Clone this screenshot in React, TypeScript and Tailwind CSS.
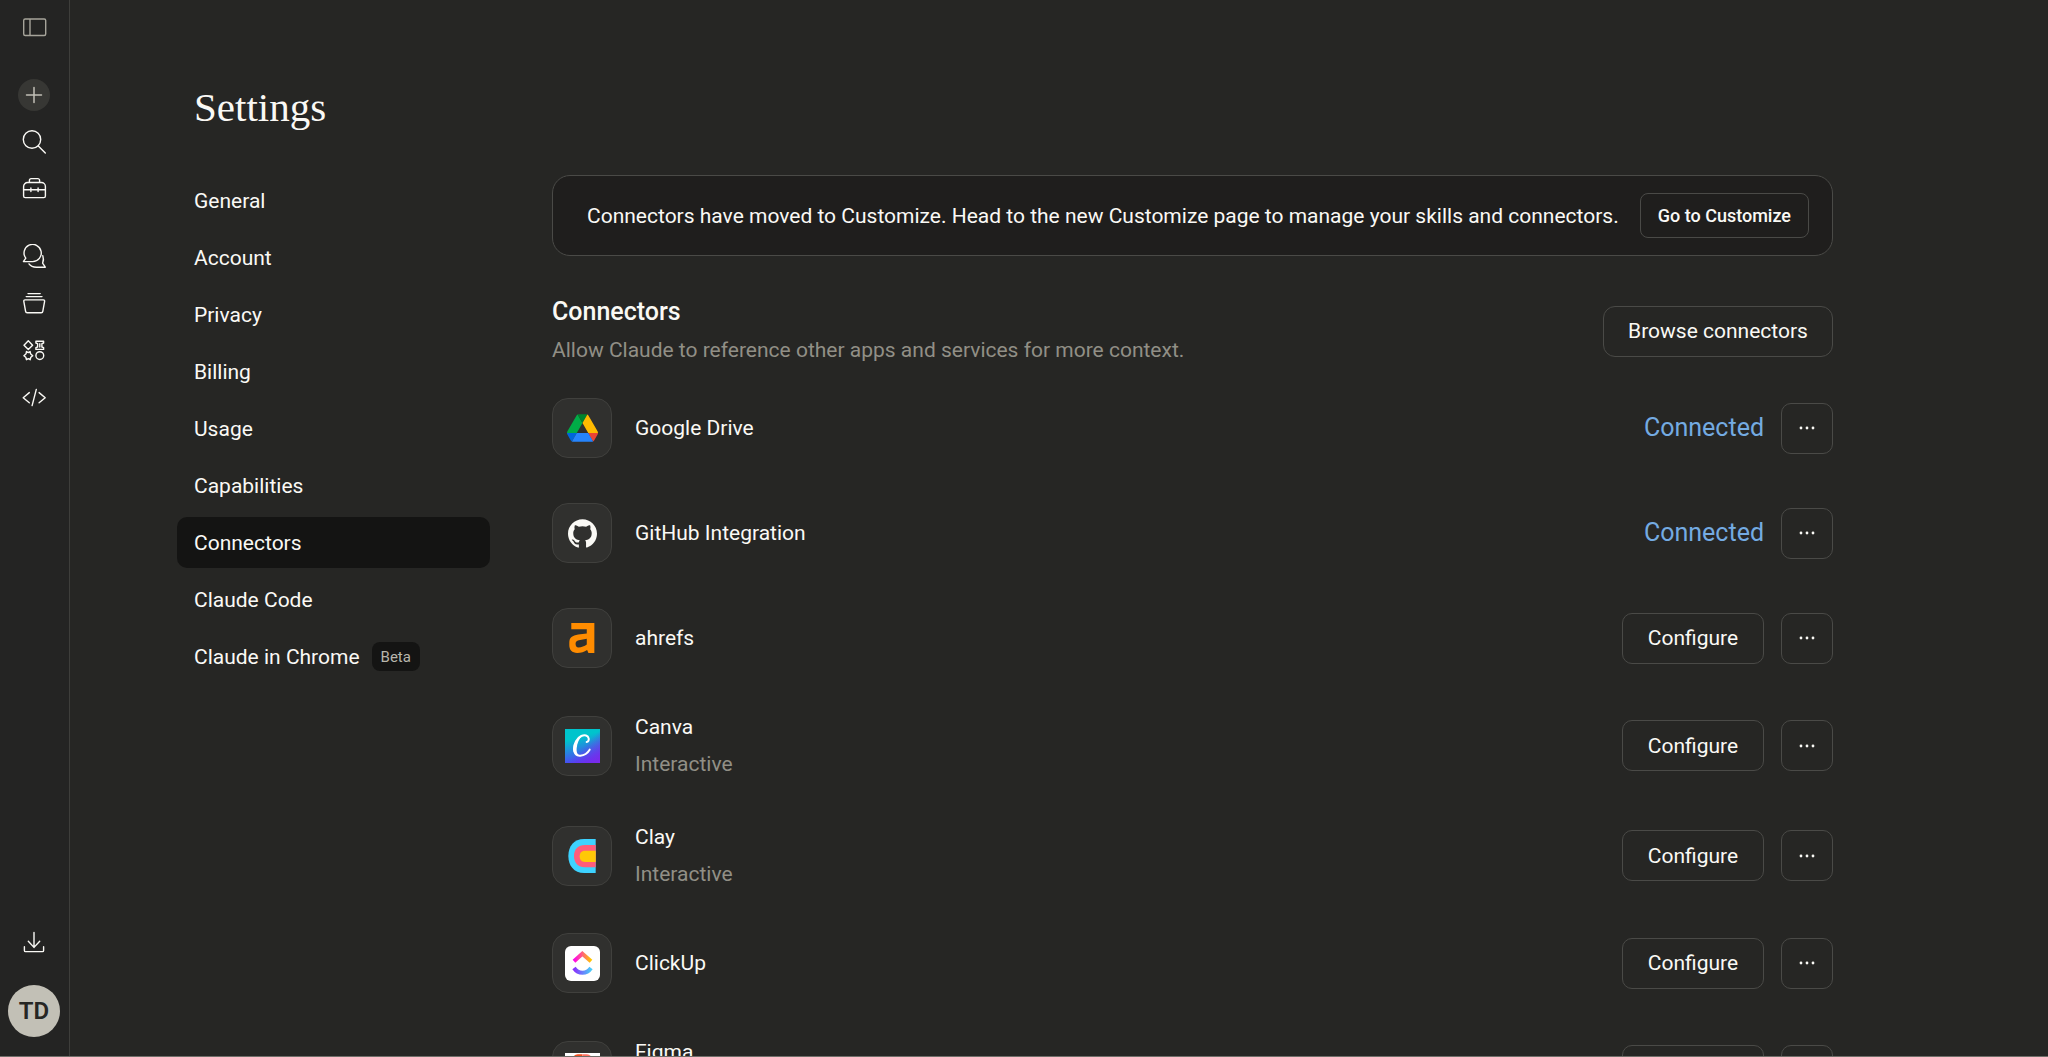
import type { ReactNode } from "react";
import { SiGithub } from "react-icons/si";

const navItems = [
  { label: "General" },
  { label: "Account" },
  { label: "Privacy" },
  { label: "Billing" },
  { label: "Usage" },
  { label: "Capabilities" },
  { label: "Connectors", active: true },
  { label: "Claude Code" },
  { label: "Claude in Chrome", badge: "Beta" },
];

type Connector = {
  name: string;
  note?: string;
  connected?: boolean;
  logo: ReactNode;
};

const connectors: Connector[] = [
  { name: "Google Drive", connected: true, logo: <DriveLogo /> },
  { name: "GitHub Integration", connected: true, logo: <SiGithub size={29} color="#faf9f5" /> },
  { name: "ahrefs", logo: <AhrefsLogo /> },
  { name: "Canva", note: "Interactive", logo: <CanvaLogo /> },
  { name: "Clay", note: "Interactive", logo: <ClayLogo /> },
  { name: "ClickUp", logo: <ClickUpLogo /> },
  { name: "Figma", note: "Interactive", logo: <FigmaLogo /> },
];

function DriveLogo() {
  return (
    <svg width="31" height="28" viewBox="0 0 87.3 78">
      <path d="m6.6 66.85 3.85 6.65c.8 1.4 1.95 2.5 3.3 3.3l13.75-23.8h-27.5c0 1.55.4 3.1 1.2 4.5z" fill="#0066da" />
      <path d="m43.65 25-13.75-23.8c-1.35.8-2.5 1.9-3.3 3.3l-25.4 44a9.06 9.06 0 0 0 -1.2 4.5h27.5z" fill="#00ac47" />
      <path d="m73.55 76.8c1.35-.8 2.5-1.9 3.3-3.3l1.6-2.75 7.65-13.25c.8-1.4 1.2-2.95 1.2-4.5h-27.502l5.852 11.5z" fill="#ea4335" />
      <path d="m43.65 25 13.75-23.8c-1.35-.8-2.9-1.2-4.5-1.2h-18.5c-1.6 0-3.15.45-4.5 1.2z" fill="#00832d" />
      <path d="m59.8 53h-32.3l-13.75 23.8c1.35.8 2.9 1.2 4.5 1.2h50.8c1.6 0 3.15-.45 4.5-1.2z" fill="#2684fc" />
      <path d="m73.4 26.5-12.7-22c-.8-1.4-1.95-2.5-3.3-3.3l-13.75 23.8 16.15 28h27.45c0-1.55-.4-3.1-1.2-4.5z" fill="#ffba00" />
    </svg>
  );
}

function AhrefsLogo() {
  return (
    <svg width="26" height="30" viewBox="0 0 77 91">
      <path
        fill="#ff8c00"
        fillRule="evenodd"
        d="M6 0H76V91H58L54 82C45 88 36 91 24 91C8 91 0 82 0 67V60C0 44 9 38 27 35L53 32V19H6ZM53 48L29 52C22 53 19 57 19 63C19 70 22 74 28 74C37 74 46 70 53 65Z"
      />
    </svg>
  );
}

function CanvaLogo() {
  return (
    <svg width="35" height="34" viewBox="0 0 105 102">
      <defs>
        <linearGradient id="canvaBase" x1="0.3" y1="0" x2="0.6" y2="1">
          <stop offset="0.25" stopColor="#00c4cc" />
          <stop offset="1" stopColor="#5a32fa" />
        </linearGradient>
        <linearGradient id="canvaCorner" x1="0.3" y1="0.3" x2="1" y2="1">
          <stop offset="0.3" stopColor="#7d2ae8" stopOpacity="0" />
          <stop offset="1" stopColor="#7d2ae8" />
        </linearGradient>
      </defs>
      <rect width="105" height="102" fill="url(#canvaBase)" />
      <rect width="105" height="102" fill="url(#canvaCorner)" />
      <path
        d="M65 39C70 39 72 33 71 28C69 19 59 17 49 21C36 27 27 44 27 60C27 74 35 81 46 80C58 79 68 72 74 62"
        fill="none"
        stroke="#fff"
        strokeWidth="6"
        strokeLinecap="round"
      />
      <path d="M52 20C37 25 25 43 25 60C25 75 34 82 47 81C37 78 34 70 35 58C36 41 43 28 52 20Z" fill="#fff" />
    </svg>
  );
}

function ClayLogo() {
  return (
    <svg width="28" height="34" viewBox="0 0 84 102">
      <path d="M83 0V102H48C18 102 1 80 1 51S18 0 48 0Z" fill="#3dd2ff" />
      <path d="M83 18V85H51C30 85 18 71 18 51S30 18 51 18Z" fill="#ff5c7a" />
      <path d="M83 35V69H51C40 69 35 62 35 52S40 35 51 35Z" fill="#ffc907" />
    </svg>
  );
}

function ClickUpLogo() {
  return (
    <svg width="35" height="35" viewBox="0 0 105 105">
      <defs>
        <linearGradient id="clickTop" x1="0" y1="0" x2="1" y2="0">
          <stop offset="0" stopColor="#ff02f0" />
          <stop offset="1" stopColor="#ffc800" />
        </linearGradient>
        <linearGradient id="clickBottom" x1="0" y1="0" x2="1" y2="0">
          <stop offset="0" stopColor="#8930fd" />
          <stop offset="1" stopColor="#49ccf9" />
        </linearGradient>
      </defs>
      <rect width="105" height="105" rx="18" fill="#fff" />
      <path d="M27 46L52 23L78 46" fill="none" stroke="url(#clickTop)" strokeWidth="12" />
      <path d="M27 66C40 85 65 85 78 66" fill="none" stroke="url(#clickBottom)" strokeWidth="12" />
    </svg>
  );
}

function FigmaLogo() {
  return (
    <svg width="35" height="35" viewBox="0 0 105 105">
      <rect width="105" height="105" fill="#fff" />
      <path d="M52 4V36H38A16 16 0 0 1 38 4Z" fill="#f24e1e" />
      <path d="M52 4H66A16 16 0 0 1 66 36H52Z" fill="#ff7262" />
      <path d="M52 36V68H38A16 16 0 0 1 38 36Z" fill="#a259ff" />
      <circle cx="68" cy="52" r="16" fill="#1abcfe" />
      <path d="M52 68V84A16 16 0 1 1 38 68Z" fill="#0acf83" />
    </svg>
  );
}

function RailIcon({ label, children }: { label: string; children: ReactNode }) {
  return (
    <button aria-label={label} className="flex h-[47px] w-full items-center justify-center text-[#faf9f5]">
      <svg
        width="26"
        height="26"
        viewBox="0 1 26 26"
        fill="none"
        stroke="currentColor"
        strokeWidth="1.4"
        strokeLinecap="round"
        strokeLinejoin="round"
      >
        {children}
      </svg>
    </button>
  );
}

function Rail() {
  return (
    <aside className="flex w-[70px] shrink-0 flex-col border-r border-[#3e3e3b] bg-[#242423] pr-px pb-[19px]">
      <button aria-label="Open sidebar" className="flex h-[54px] items-center justify-center text-[#a6a49a]">
        <svg width="26" height="26" viewBox="0 0 26 26" fill="none" stroke="currentColor" strokeWidth="1.4">
          <rect x="2.7" y="5" width="22" height="16.5" rx="1.5" />
          <path d="M9 5V21.5" />
        </svg>
      </button>

      <div className="mt-[17px] flex flex-col">
        <button aria-label="New chat" className="flex h-[47px] items-center justify-center text-[#c2c0b6]">
          <span className="flex size-8 items-center justify-center rounded-full bg-[#373734]">
            <svg width="18" height="18" viewBox="0 0 18 18" stroke="currentColor" strokeWidth="1.5" strokeLinecap="round">
              <path d="M9 1.5V16.5M1.5 9H16.5" />
            </svg>
          </span>
        </button>
        <RailIcon label="Search">
          <circle cx="11" cy="11.5" r="8.7" />
          <path d="M17.3 17.9L24.3 24.9" />
        </RailIcon>
        <RailIcon label="Customize">
          <path d="M2.6 11.5A4 4 0 0 1 6.6 7.5H20.4A4 4 0 0 1 24.4 11.5V21A1.6 1.6 0 0 1 22.8 22.6H4.2A1.6 1.6 0 0 1 2.6 21Z" />
          <path d="M8.4 7.4V5.4A1.8 1.8 0 0 1 10.2 3.6H16.8A1.8 1.8 0 0 1 18.6 5.4V7.4M2.6 14.7H24.4M9.9 13V16.6M17.1 13V16.6" />
        </RailIcon>
      </div>

      <div className="mt-[21px] flex flex-col">
        <RailIcon label="Chats">
          <path d="M11.7 18.6H2.4L4.8 15.2A8.6 8.6 0 1 1 11.7 18.6Z" />
          <path d="M21.8 12.6C22.6 15 22.6 17.8 21.6 20.2L24.3 24.2H15.5C12.4 24.2 9.6 23.2 8 20.9" />
        </RailIcon>
        <RailIcon label="Projects">
          <path d="M7 3.6H19.2M5.2 6.6H21M4 9.9H22.4A1.2 1.2 0 0 1 23.6 11.3L21.8 21.4A1.6 1.6 0 0 1 20.2 22.8H6.2A1.6 1.6 0 0 1 4.6 21.4L2.8 11.3A1.2 1.2 0 0 1 4 9.9Z" />
        </RailIcon>
        <RailIcon label="Artifacts">
          <path d="M7.3 3.8L11.6 8.2L7.3 12.6L3 8.2Z" />
          <path d="M14.9 4.2H22.6V6L20.9 6.6V10L22.6 10.6V12.4H14.9V10.6L16.6 10V6.6L14.9 6ZM18.8 6.8V10" />
          <path d="M5.5 14.5L7.3 15.6L9.1 14.5L9.5 16.7L11.7 18.7L9.8 20.3L9.1 22.7L7.3 21.6L5.5 22.7L4.8 20.3L2.9 18.7L5.1 16.7Z" />
          <circle cx="18.8" cy="18.6" r="3.9" />
        </RailIcon>
        <RailIcon label="Code">
          <path d="M8.3 8.6L2.2 13.7L8.3 18.8M18.1 8.6L24.2 13.7L18.1 18.8M15.3 5.4L11.1 21.6" />
        </RailIcon>
      </div>

      <div className="mt-auto flex flex-col items-center gap-[19px]">
        <RailIcon label="Download">
          <path d="M13 3.4V18.4M7.3 12.2L13 18.4L18.7 12.2M3.4 17.8V21.4A1.2 1.2 0 0 0 4.6 22.6H21.4A1.2 1.2 0 0 0 22.6 21.4V17.8" />
        </RailIcon>
        <button className="flex size-[52px] items-center justify-center rounded-full bg-[#c2c0b6] text-2xl font-semibold text-[#262624]">
          TD
        </button>
      </div>
    </aside>
  );
}

function SettingsNav() {
  return (
    <nav className="flex w-[313px] shrink-0 flex-col gap-1.5">
      {navItems.map((item) => (
        <a
          key={item.label}
          href="#"
          aria-current={item.active ? "page" : undefined}
          className={
            item.active
              ? "flex h-[51px] items-center gap-3 rounded-[10px] bg-[#141413] px-[17px]"
              : "flex h-[51px] items-center gap-3 rounded-[10px] px-[17px]"
          }
        >
          {item.label}
          {item.badge && (
            <span className="flex h-[29px] items-center rounded-lg bg-[#141413] px-[9px] text-[15px] text-[#b8b6ac]">
              {item.badge}
            </span>
          )}
        </a>
      ))}
    </nav>
  );
}

function ConnectorRow({ connector }: { connector: Connector }) {
  return (
    <li className="flex items-center gap-[17px]">
      <div className="mr-1.5 flex size-[60px] shrink-0 items-center justify-center rounded-2xl border border-[#40403d] bg-[#30302e]">
        {connector.logo}
      </div>
      <div className="flex flex-1 flex-col gap-[9px]">
        <p>{connector.name}</p>
        {connector.note && <p className="text-[#918f86]">{connector.note}</p>}
      </div>
      {connector.connected ? (
        <span className="text-[25px] text-[#74abe2]">Connected</span>
      ) : (
        <button className="h-[51px] w-[142px] rounded-[10px] border border-[#4a4a47] font-[450]">Configure</button>
      )}
      <button
        aria-label={`More options for ${connector.name}`}
        className="flex h-[51px] w-[52px] items-center justify-center rounded-[10px] border border-[#4a4a47]"
      >
        <svg width="18" height="4" viewBox="0 0 18 4" fill="currentColor">
          <circle cx="3" cy="2" r="1.4" />
          <circle cx="9" cy="2" r="1.4" />
          <circle cx="15" cy="2" r="1.4" />
        </svg>
      </button>
    </li>
  );
}

export default function App() {
  return (
    <div className="flex h-screen overflow-hidden border-b border-[#6f6e69] bg-[#262624] font-[Roboto,'Liberation_Sans',sans-serif] text-[21px] leading-7 text-[#faf9f5]">
      <Rail />

      <main className="min-w-0 flex-1 pr-[215px] pl-[107px]">
        <h1 className="mt-[82px] pl-[17px] font-['Liberation_Serif',serif] text-[41px] leading-[50px]">Settings</h1>

        <div className="mt-[43px] flex gap-[62px]">
          <SettingsNav />

          <div className="min-w-0 flex-1">
            <section className="flex items-center justify-between gap-2 rounded-[18px] border border-[#4a4a47] bg-[#1f1e1d] py-[17px] pr-[23px] pl-[34px]">
              <p>
                Connectors have moved to Customize. Head to the new Customize page to manage your skills and connectors.
              </p>
              <button className="h-[45px] shrink-0 rounded-lg border border-[#4a4a47] px-[17px] text-lg font-medium">
                Go to Customize
              </button>
            </section>

            <div className="mt-[42px] flex items-center justify-between">
              <div className="flex flex-col gap-2.5">
                <h2 className="text-[25px] font-medium">Connectors</h2>
                <p className="text-[#918f86]">Allow Claude to reference other apps and services for more context.</p>
              </div>
              <button className="h-[51px] w-[230px] rounded-xl border border-[#4a4a47] font-[450]">
                Browse connectors
              </button>
            </div>

            <ul className="mt-[34px] flex flex-col gap-[45px]">
              {connectors.map((connector) => (
                <ConnectorRow key={connector.name} connector={connector} />
              ))}
            </ul>
          </div>
        </div>
      </main>
    </div>
  );
}
